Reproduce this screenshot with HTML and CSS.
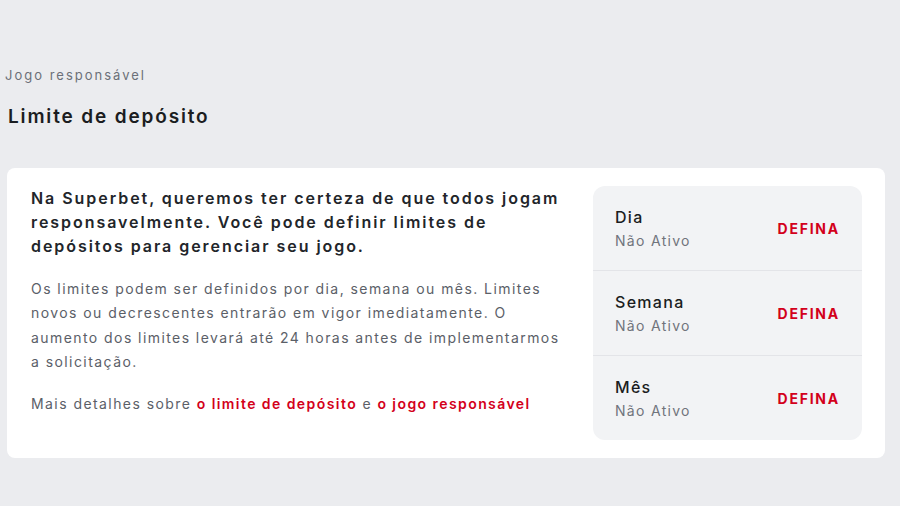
FILE: index.html
```html
<!DOCTYPE html>
<html lang="pt">
<head>
<meta charset="utf-8">
<link rel="stylesheet" href="styles.css">
</head>
<body>
<div class="page">
  <div class="breadcrumb">Jogo responsável</div>
  <h1 class="title">Limite de depósito</h1>
  <div class="card">
    <div class="info">
      <p class="lead">Na Superbet, queremos ter certeza de que todos jogam responsavelmente. Você pode definir limites de depósitos para gerenciar seu jogo.</p>
      <p class="body">Os limites podem ser definidos por dia, semana ou mês. Limites novos ou decrescentes entrarão em vigor imediatamente. O aumento dos limites levará até 24 horas antes de implementarmos a solicitação.</p>
      <p class="body more">Mais detalhes sobre <a class="link">o limite de depósito</a> e <a class="link">o jogo responsável</a></p>
    </div>
    <div class="limits">
      <div class="row">
        <div class="label"><div class="period">Dia</div><div class="status">Não Ativo</div></div>
        <a class="action">DEFINA</a>
      </div>
      <div class="row">
        <div class="label"><div class="period">Semana</div><div class="status">Não Ativo</div></div>
        <a class="action">DEFINA</a>
      </div>
      <div class="row">
        <div class="label"><div class="period">Mês</div><div class="status">Não Ativo</div></div>
        <a class="action">DEFINA</a>
      </div>
    </div>
  </div>
</div>
</body>
</html>
```
FILE: styles.css
```css
html, body {
  margin: 0;
  padding: 0;
  background: #ebecef;
  font-family: Inter, "Noto Sans", Arial, sans-serif;
}
.page {
  padding-top: 66px;
  width: 900px;
  height: 506px;
  box-sizing: border-box;
}
.breadcrumb {
  padding-left: 5px;
  font-size: 13px;
  line-height: 18px;
  letter-spacing: 2px;
  color: #6c7078;
}
.title {
  margin: 23px 0 0 8px;
  font-size: 19px;
  line-height: 20px;
  font-weight: 600;
  letter-spacing: 1.85px;
  color: #1b1d21;
}
.card {
  margin: 41px 0 0 7px;
  width: 878px;
  height: 290px;
  box-sizing: border-box;
  background: #ffffff;
  border-radius: 8px;
  padding: 18px 23px;
  display: flex;
  gap: 23px;
}
.info {
  flex: 1;
  padding-left: 1px;
  padding-right: 4px;
}
.lead {
  margin: 0;
  font-size: 16px;
  line-height: 24px;
  font-weight: 600;
  letter-spacing: 1.95px;
  color: #22252a;
}
.body {
  margin: 19px 0 0;
  font-size: 14px;
  line-height: 24.3px;
  letter-spacing: 1.43px;
  color: #5b6068;
}
.body.more {
  margin-top: 18px;
}
.link {
  color: #d3001b;
  font-weight: 600;
}
.limits {
  width: 269px;
  background: #f2f3f5;
  border-radius: 12px;
  display: flex;
  flex-direction: column;
}
.row {
  flex: 1;
  display: flex;
  align-items: center;
  justify-content: space-between;
  padding: 0 22px 0 22px;
  border-bottom: 1px solid #e3e4e8;
}
.row:last-child {
  border-bottom: none;
}
.period {
  font-size: 16px;
  line-height: 24px;
  font-weight: 500;
  letter-spacing: 1.3px;
  color: #1b1d21;
}
.status {
  margin-top: 2px;
  font-size: 14px;
  line-height: 20px;
  letter-spacing: 1.3px;
  color: #70747c;
}
.action {
  font-size: 14px;
  font-weight: 700;
  color: #d3001b;
  letter-spacing: 1.75px;
}
```
